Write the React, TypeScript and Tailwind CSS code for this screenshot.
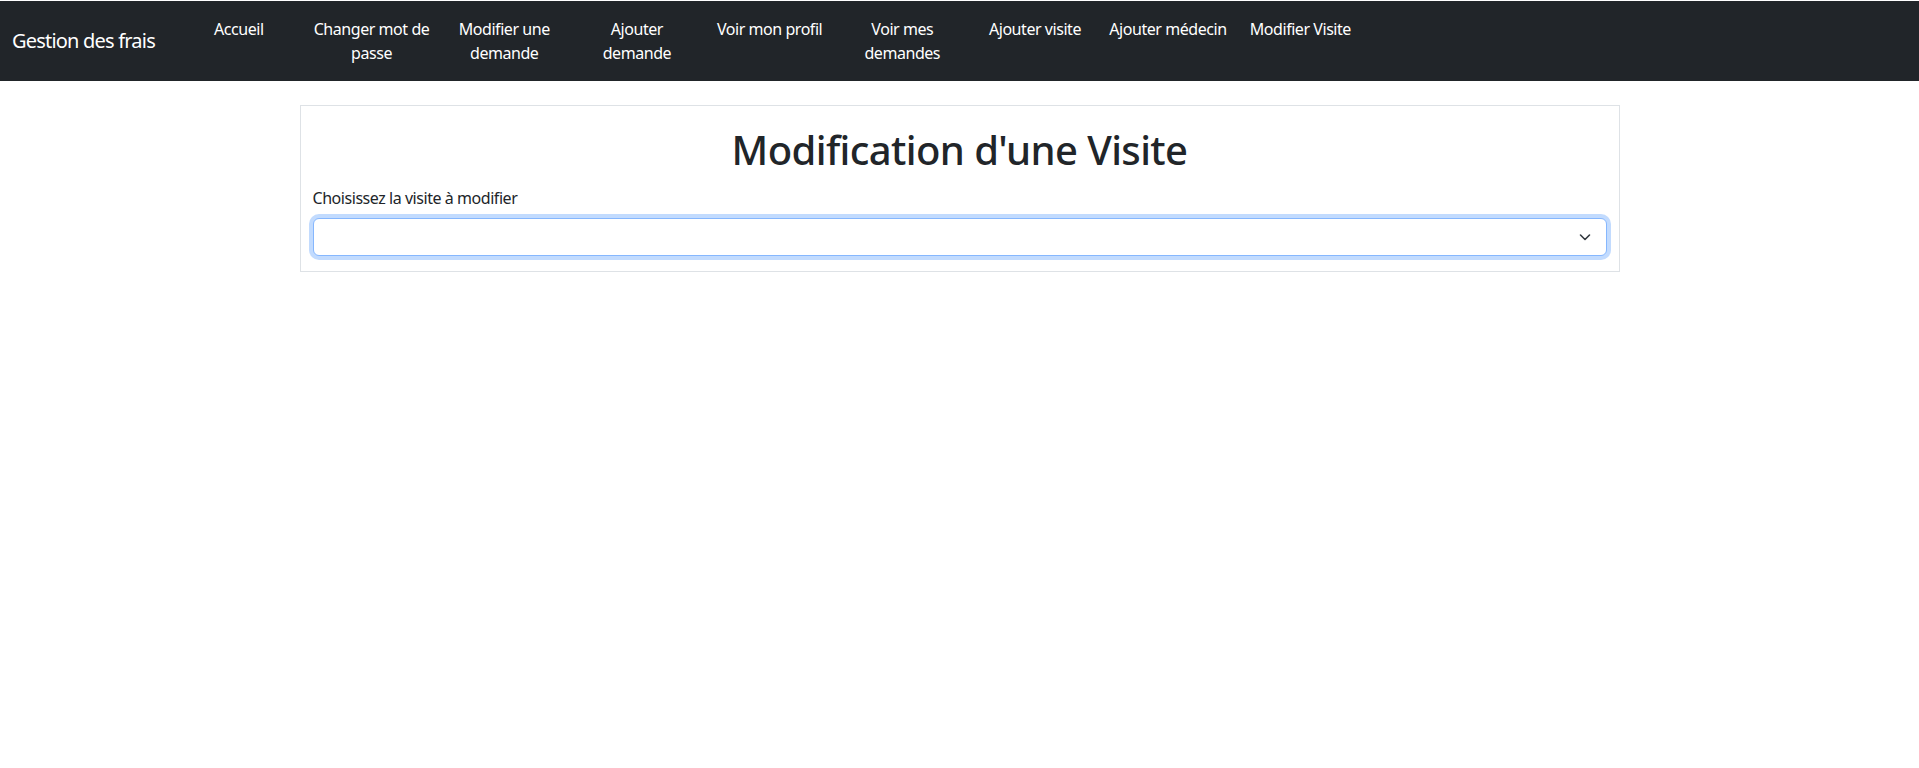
const navItems: string[][] = [
  ["Accueil"],
  ["Changer mot de", "passe"],
  ["Modifier une", "demande"],
  ["Ajouter", "demande"],
  ["Voir mon profil"],
  ["Voir mes", "demandes"],
  ["Ajouter visite"],
  ["Ajouter médecin"],
  ["Modifier Visite"],
];

const font = "font-['Segoe_UI','Noto_Sans','Open_Sans',sans-serif]";

function Navbar() {
  return (
    <nav className="flex h-20 items-center bg-[#212529] py-2">
      <a className="ml-3 mr-4 w-[144.5px] whitespace-nowrap py-[5px] text-[20px] leading-[30px] tracking-[-0.8px] text-white">
        Gestion des frais
      </a>
      <ul className="flex h-full items-start">
        {navItems.map((lines, i) => (
          <li key={i} className="w-[132.7px] px-2 py-2 text-center text-[16px] leading-6 tracking-[-0.45px] text-white">
            {lines.map((l, j) => (
              <div key={j} className="whitespace-nowrap">
                {l}
              </div>
            ))}
          </li>
        ))}
      </ul>
    </nav>
  );
}

export default function App() {
  return (
    <div className={`min-h-screen bg-white pt-px ${font}`}>
      <Navbar />
      <div className="mx-auto mt-6 w-[1320px] border border-[#dee2e6] px-3 pb-[15px] pt-5">
        <h1 className="mb-3 text-center text-[40px] font-medium leading-[48px] tracking-[-0.6px] text-[#212529]">
          Modification d'une Visite
        </h1>
        <label className="mb-2 block text-[16px] leading-6 tracking-[-0.45px] text-[#212529]">
          Choisissez la visite à modifier
        </label>
        <div className="relative h-[38px] rounded-md border border-[#86b7fe] bg-white shadow-[0_0_0_4px_rgba(13,110,253,0.25)]">
          <svg
            className="absolute right-[15px] top-1/2 -translate-y-1/2"
            width="12"
            height="8"
            viewBox="0 0 12 8"
            fill="none"
            stroke="#343a40"
            strokeWidth="1.6"
            strokeLinecap="round"
            strokeLinejoin="round"
          >
            <path d="M1.5 2l4.5 4.5L10.5 2" />
          </svg>
        </div>
      </div>
    </div>
  );
}
